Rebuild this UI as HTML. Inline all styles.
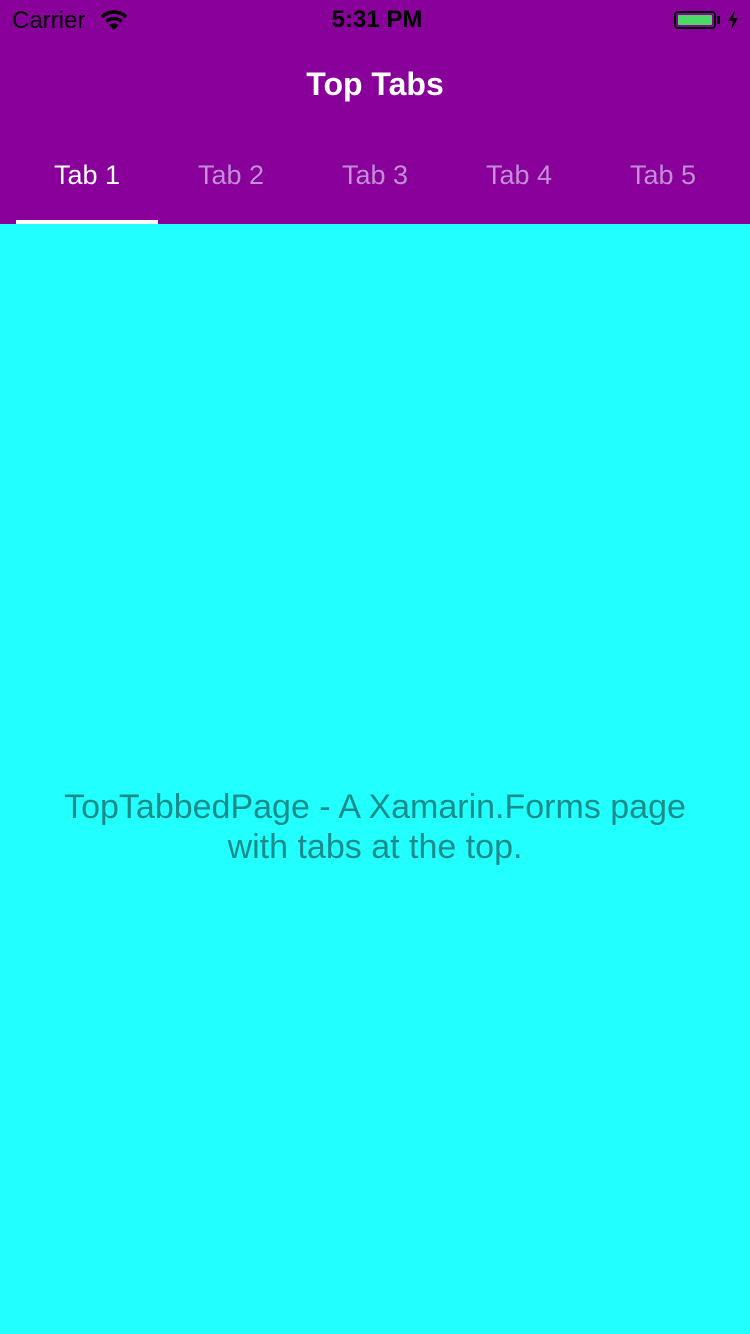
<!DOCTYPE html>
<html><head><style>
body{margin:0;width:750px;height:1334px;background:#22ffff;font-family:"Liberation Sans",sans-serif;position:relative;overflow:hidden}
.hdr{position:absolute;left:0;top:0;width:750px;height:224px;background:#880099}
.t{position:absolute;white-space:nowrap}
.tab{position:absolute;top:160px;width:144px;text-align:center;font-size:27px;color:#c58dd6}
</style></head><body>
<div class="hdr"></div>
<div class="t" style="left:12px;top:7px;font-size:24px;color:#000">Carrier</div>
<svg style="position:absolute;left:100px;top:10px" width="28" height="20" viewBox="0 0 28 20"><path d="M2 7 A17 17 0 0 1 26 7" stroke="#000" stroke-width="3.5" fill="none"/><path d="M6.5 11.5 A11 11 0 0 1 21.5 11.5" stroke="#000" stroke-width="3.5" fill="none"/><path d="M14 20 L9.5 15 A7 7 0 0 1 18.5 15 Z" fill="#000"/></svg>
<div class="t" style="left:2px;width:750px;text-align:center;top:6px;font-size:24px;font-weight:bold;color:#000">5:31 PM</div>
<div style="position:absolute;left:674px;top:11px;width:42px;height:18px;border:2px solid #000;border-radius:4px;box-sizing:border-box;padding:2px"><div style="background:#4cd964;width:100%;height:100%;border-radius:1px"></div></div>
<div style="position:absolute;left:717px;top:16px;width:3px;height:8px;background:#000"></div>
<svg style="position:absolute;left:727px;top:10px" width="12" height="20" viewBox="0 0 12 20"><path d="M8 0 L1 11 H6 L4 20 L11 8 H6 Z" fill="#000"/></svg>
<div class="t" style="left:0;width:750px;text-align:center;top:66px;font-size:32px;font-weight:bold;color:#fff">Top Tabs</div>
<div class="tab" style="left:15px;color:#fff">Tab 1</div>
<div class="tab" style="left:159px">Tab 2</div>
<div class="tab" style="left:303px">Tab 3</div>
<div class="tab" style="left:447px">Tab 4</div>
<div class="tab" style="left:591px">Tab 5</div>
<div style="position:absolute;left:16px;top:220px;width:142px;height:4px;background:#fff"></div>
<div class="t" style="left:0;width:750px;text-align:center;top:787px;font-size:34px;line-height:40px;color:#1a8c8c">TopTabbedPage - A Xamarin.Forms page<br>with tabs at the top.</div>
</body></html>
